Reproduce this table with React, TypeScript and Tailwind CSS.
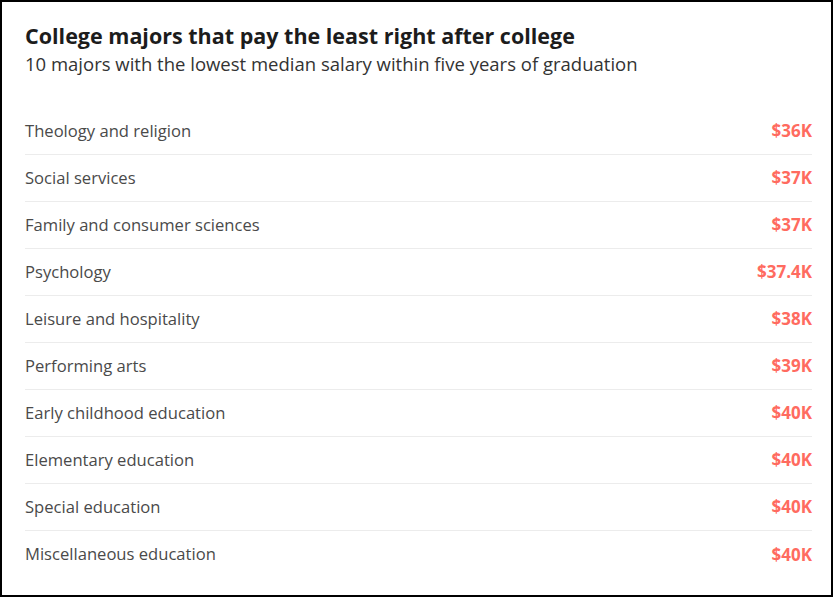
import React from "react";

const majors = [
  { name: "Theology and religion", salary: "$36K" },
  { name: "Social services", salary: "$37K" },
  { name: "Family and consumer sciences", salary: "$37K" },
  { name: "Psychology", salary: "$37.4K" },
  { name: "Leisure and hospitality", salary: "$38K" },
  { name: "Performing arts", salary: "$39K" },
  { name: "Early childhood education", salary: "$40K" },
  { name: "Elementary education", salary: "$40K" },
  { name: "Special education", salary: "$40K" },
  { name: "Miscellaneous education", salary: "$40K" },
];

export default function App() {
  return (
    <div className="w-[833px] h-[597px] bg-white border-2 border-black font-['Open_Sans',sans-serif] overflow-hidden">
      <div className="pl-[23px] pr-[19px] pt-[20px]">
        <h1 className="text-[21.5px] leading-[28px] font-bold text-[#1c1c1c]">
          College majors that pay the least right after college
        </h1>
        <p className="text-[18.5px] leading-[28px] text-[#333]">
          10 majors with the lowest median salary within five years of graduation
        </p>

        {/* Salary list */}
        <ul className="mt-[30px]">
          {majors.map((m, i) => (
            <li
              key={m.name}
              className={`flex items-center justify-between h-[47px] ${
                i < majors.length - 1 ? "border-b border-[#ececec]" : ""
              }`}
            >
              <span className="text-[16.6px] text-[#4a4a4a]">{m.name}</span>
              <span className="text-[17px] font-bold text-[#ff6b5f]">
                {m.salary}
              </span>
            </li>
          ))}
        </ul>
      </div>
    </div>
  );
}
